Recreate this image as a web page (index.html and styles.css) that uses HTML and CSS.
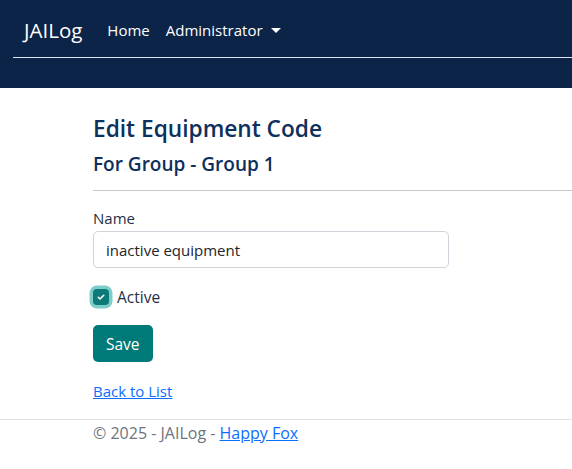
FILE: index.html
```html
<!DOCTYPE html>
<html lang="en">

<head>
    <meta charset="UTF-8">
    <meta name="viewport" content="width=device-width, initial-scale=1.0">
    <title>Edit - JAILog</title>
    <link rel="stylesheet" href="styles.css">
</head>

<body>
    <header class="topbar">
        <nav class="navbar">
            <a class="brand" href="#">JAILog</a>
            <ul class="nav-links">
                <li><a href="#">Home</a></li>
                <li><a href="#" class="dropdown">Administrator</a></li>
            </ul>
        </nav>
    </header>

    <main class="page">
        <h1 class="title">Edit Equipment Code</h1>
        <h4 class="subtitle">For Group - Group 1</h4>
        <hr class="rule">

        <form class="form">
            <div class="field">
                <label for="name">Name</label>
                <input id="name" class="input" type="text" value="inactive equipment">
            </div>
            <div class="check">
                <span class="box">
                    <svg width="10" height="10" viewBox="0 0 20 20">
                        <path d="M4.5 10.5l3.5 3.5L15.5 6.5" fill="none" stroke="#fff" stroke-width="3.2" stroke-linecap="round" stroke-linejoin="round" />
                    </svg>
                </span>
                <span>Active</span>
            </div>
            <button type="button" class="btn">Save</button>
        </form>

        <a class="back" href="#">Back to List</a>
    </main>

    <footer class="footer">
        <div class="footer-inner">
            &copy; 2025 - JAILog - <a href="#">Happy Fox</a>
        </div>
    </footer>
</body>

</html>
```

FILE: styles.css
```css
body {
    margin: 0;
    font-family: "Open Sans", "Noto Sans", sans-serif;
    font-size: 15px;
    color: #212529;
    background: #fff;
}

/* 顶部导航 */
.topbar {
    background: #0b2447;
    height: 88px;
}

.navbar {
    display: flex;
    align-items: center;
    margin-left: 13px;
    padding: 3px 0 0 11px;
    height: 58px;
    border-bottom: 1px solid #dbe4f3;
    box-sizing: border-box;
}

.brand {
    color: #fff;
    text-decoration: none;
    font-size: 20.5px;
    margin-right: 25px;
}

.nav-links {
    display: flex;
    list-style: none;
    margin: 0;
    padding: 0;
    gap: 16px;
}

.nav-links a {
    color: #fff;
    text-decoration: none;
    font-size: 15px;
}

.dropdown::after {
    content: "";
    display: inline-block;
    margin-left: 8px;
    vertical-align: 3px;
    border-top: 5px solid #fff;
    border-left: 5px solid transparent;
    border-right: 5px solid transparent;
}

/* 内容 */
.page {
    padding: 26px 0 0 93px;
}

.title {
    margin: 0;
    font-size: 22.7px;
    font-weight: 600;
    color: #0d305c;
    line-height: 30px;
}

.subtitle {
    margin: 7px 0 0;
    font-size: 19px;
    font-weight: 600;
    color: #0d305c;
    line-height: 26px;
}

.rule {
    margin: 13px 0 0;
    border: 0;
    border-top: 1px solid #c8c8c8;
}

.form {
    margin-top: 16px;
}

.field label {
    display: block;
    font-size: 15px;
    line-height: 22px;
    color: #1f2f45;
    margin-bottom: 2px;
}

.input {
    width: 356px;
    height: 37px;
    box-sizing: border-box;
    border: 1px solid #ced4da;
    border-radius: 5px;
    padding: 0 12px;
    font: inherit;
    font-size: 15px;
    color: #212529;
}

.check {
    display: flex;
    align-items: center;
    gap: 8px;
    margin-top: 18px;
    font-size: 15.5px;
    color: #1f2f45;
}

.box {
    width: 16px;
    height: 16px;
    border-radius: 4px;
    background: #0b7a78;
    box-shadow: 0 0 0 3.5px #7fcdcb;
    display: flex;
    align-items: center;
    justify-content: center;
}

.btn {
    display: block;
    margin-top: 17px;
    height: 37px;
    padding: 0 13px;
    border: 0;
    border-radius: 5px;
    background: #007a78;
    color: #fff;
    font: inherit;
    font-size: 15.5px;
}

.back {
    display: inline-block;
    margin-top: 19px;
    color: #0d6efd;
    font-size: 15px;
}

.footer {
    margin-top: 18px;
    border-top: 1px solid #dee2e6;
}

.footer-inner {
    padding: 2px 0 0 93px;
    color: #6c757d;
    font-size: 16px;
}

.footer-inner a {
    color: #0d6efd;
}
```
